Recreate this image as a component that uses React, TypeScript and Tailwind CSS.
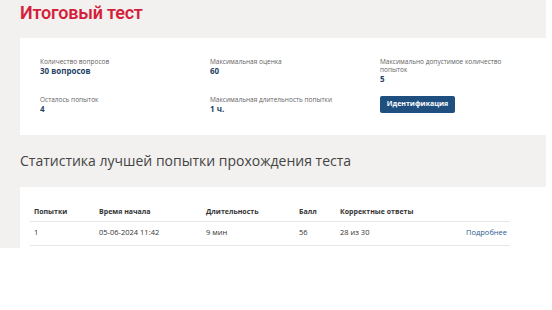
import React from 'react';

const INFO = [
    { label: 'Количество вопросов', value: '30 вопросов' },
    { label: 'Максимальная оценка', value: '60' },
    { label: 'Максимально допустимое количество попыток', value: '5' },
    { label: 'Осталось попыток', value: '4' },
    { label: 'Максимальная длительность попытки', value: '1 ч.' },
];

const ROWS = [
    { attempt: '1', start: '05-06-2024 11:42', duration: '9 мин', score: '56', correct: '28 из 30' },
];

const Info: React.FC<{ label: string; value: string }> = ({ label, value }) => (
    <div>
        <div className="text-[6.5px] leading-[8px] text-[#5f5f5f]">{label}</div>
        <div className="text-[8px] leading-[9px] font-bold text-[#253f66]">{value}</div>
    </div>
);

export default function App() {
    return (
        <div className="w-[552px] h-[310px] bg-white" style={{ fontFamily: '"Open Sans", sans-serif' }}>
            <div className="w-[546px] h-[248px] bg-[#f2f1ef] overflow-hidden pt-[1px]">
                <h1 className="pl-5 font-['Roboto',sans-serif] text-[18px] leading-[24px] font-semibold tracking-[-0.2px] text-[#d41f3c]">
                    Итоговый тест
                </h1>

                <div className="ml-5 mt-[13px] bg-white h-[97px] pl-5 pt-[20px] grid grid-cols-[170px_170px_140px] content-start gap-y-[13px]">
                    <Info {...INFO[0]} />
                    <Info {...INFO[1]} />
                    <Info {...INFO[2]} />
                    <Info {...INFO[3]} />
                    <Info {...INFO[4]} />
                    <div>
                        <button className="block h-[17px] w-[75px] rounded-[2px] bg-[#1f4f7f] text-white text-[7px] font-bold">
                            Идентификация
                        </button>
                    </div>
                </div>

                <h2 className="pl-5 mt-[15px] text-[14px] leading-[22px] font-normal text-[#444]">
                    Статистика лучшей попытки прохождения теста
                </h2>

                <div className="ml-5 mt-[15px] bg-white h-[80px] pl-[10px] pt-[16px]">
                    <table className="w-[480px] text-[7.5px] text-[#333] border-collapse">
                        <thead>
                            <tr className="border-b border-[#e6e6e6] h-[18px] text-left text-[7px]">
                                <th className="pl-1 w-[69px] font-bold">Попытки</th>
                                <th className="w-[107px] font-bold">Время начала</th>
                                <th className="w-[93px] font-bold">Длительность</th>
                                <th className="w-[41px] font-bold">Балл</th>
                                <th className="w-[126px] font-bold">Корректные ответы</th>
                                <th />
                            </tr>
                        </thead>
                        <tbody>
                            {ROWS.map((r) => (
                                <tr key={r.attempt} className="border-b border-[#e6e6e6] h-[24px]">
                                    <td className="pl-1">{r.attempt}</td>
                                    <td>{r.start}</td>
                                    <td>{r.duration}</td>
                                    <td>{r.score}</td>
                                    <td>{r.correct}</td>
                                    <td className="text-[#2b5b8c]">Подробнее</td>
                                </tr>
                            ))}
                        </tbody>
                    </table>
                </div>
            </div>
        </div>
    );
}
